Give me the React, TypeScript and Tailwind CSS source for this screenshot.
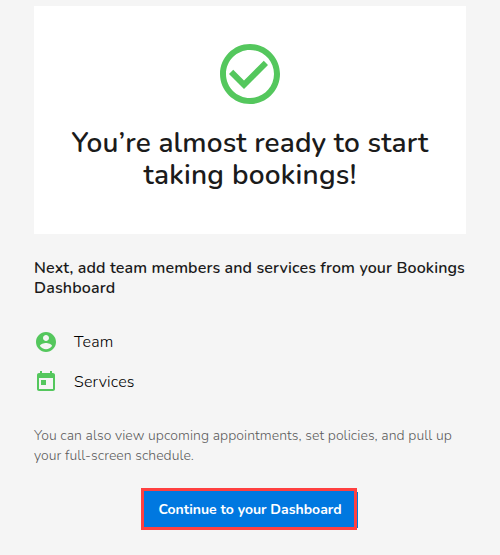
import React from "react";

const check =
  "M16.59 7.58 10 14.17l-3.59-3.58L5 12l5 5 8-8zM12 2C6.48 2 2 6.48 2 12s4.48 10 10 10 10-4.48 10-10S17.52 2 12 2zm0 18c-4.42 0-8-3.58-8-8s3.58-8 8-8 8 3.58 8 8-3.58 8-8 8z";
const person =
  "M12 2C6.48 2 2 6.48 2 12s4.48 10 10 10 10-4.48 10-10S17.52 2 12 2zm0 3c1.66 0 3 1.34 3 3s-1.34 3-3 3-3-1.34-3-3 1.34-3 3-3zm0 14.2c-2.5 0-4.71-1.28-6-3.22.03-1.99 4-3.08 6-3.08 1.99 0 5.97 1.09 6 3.08-1.29 1.94-3.5 3.22-6 3.22z";
const calendar =
  "M19 3h-1V1h-2v2H8V1H6v2H5c-1.11 0-1.99.9-1.99 2L3 19c0 1.1.89 2 2 2h14c1.1 0 2-.9 2-2V5c0-1.1-.9-2-2-2zm0 16H5V8h14v11zM7 10h5v5H7z";

function Icon({ d, className }: { d: string; className: string }) {
  return (
    <svg viewBox="0 0 24 24" fill="currentColor" className={className} aria-hidden="true">
      <path d={d} />
    </svg>
  );
}

function Step({ icon, children }: { icon: string; children: React.ReactNode }) {
  return (
    <li className="flex h-6 items-center gap-4">
      <Icon d={icon} className="size-6 text-[#54c75d]" />
      {children}
    </li>
  );
}

export default function App() {
  return (
    <main className="flex h-[555px] w-[500px] flex-col overflow-hidden bg-[#f5f5f5] px-[34px] pt-1.5 font-['Nunito','Lato',sans-serif] text-[#1b1b1b]">
      <section className="flex h-[228px] shrink-0 flex-col items-center bg-white pt-8">
        <Icon d={check} className="size-[72px] text-[#54c75d]" />
        <h1 className="mt-[17px] text-center text-[28px] leading-8 font-semibold whitespace-nowrap">
          <span className="block tracking-[0.15px]">You’re almost ready to start</span>
          <span className="block tracking-[0.25px]">taking bookings!</span>
        </h1>
      </section>

      <h2 className="mt-6 text-base leading-5 font-semibold whitespace-nowrap">
        <span className="block tracking-[0.11px]">Next, add team members and services from your Bookings</span>
        <span className="block tracking-[0.15px]">Dashboard</span>
      </h2>

      <ul className="mt-8 flex flex-col gap-4 text-base leading-5 font-light text-black">
        <Step icon={person}>
          <span className="tracking-[0.2px]">Team</span>
        </Step>
        <Step icon={calendar}>
          <span className="tracking-[0.2px]">Services</span>
        </Step>
      </ul>

      <p className="mt-8 text-sm leading-5 font-light whitespace-nowrap text-[#5c5c5c]">
        <span className="block tracking-[0.06px]">You can also view upcoming appointments, set policies, and pull up</span>
        <span className="block tracking-[0.03px]">your full-screen schedule.</span>
      </p>

      <div className="mt-[22px] ml-[107px] flex h-[42px] w-[217px] items-center bg-[linear-gradient(#0078e0,#0078e0)] bg-[length:100%_36px] bg-[position:0_4px] bg-no-repeat">
        <button className="h-[42px] w-[216px] border-3 border-[#ff4040] bg-[#0078e0] pt-px pl-0.5 text-sm leading-5 font-bold whitespace-nowrap text-white">
          <span>Continue to your Dashboard</span>
        </button>
      </div>
    </main>
  );
}
